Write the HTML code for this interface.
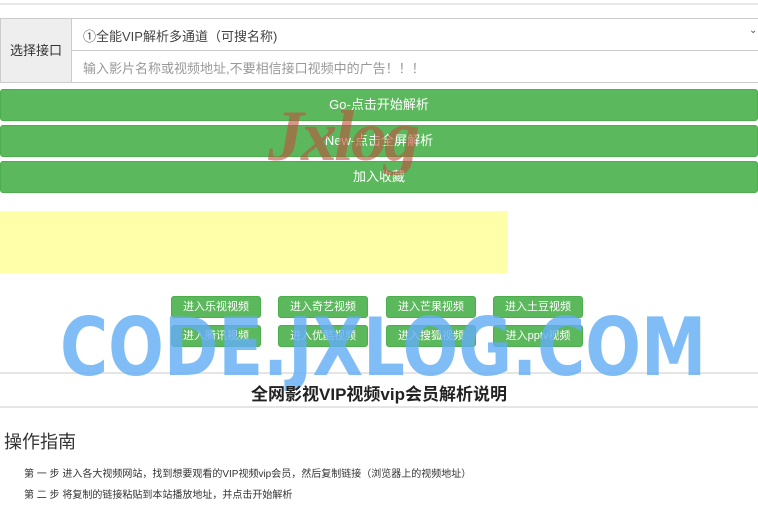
<!DOCTYPE html><html><head><meta charset="utf-8"><style>
*{margin:0;padding:0;box-sizing:border-box}
body{width:758px;height:506px;overflow:hidden;background:#fff;font-family:"Liberation Sans","Noto Sans CJK SC",sans-serif;position:relative}
.a{position:absolute}
.btn{position:absolute;left:0;width:758px;height:32px;background:#5cb85c;border:1px solid #4cae4c;border-radius:3px;color:#fff;font-size:13px;text-align:center;line-height:30px}
.sb{position:absolute;width:90px;height:22px;background:#5cb85c;border:1px solid #4cae4c;border-radius:3px;color:#fff;font-size:11px;text-align:center;line-height:20px}
</style></head><body>
<div class="a" style="left:0;top:3px;width:758px;height:2px;background:#e8e8e8"></div>
<div class="a" style="left:0;top:18px;width:758px;height:65px;border:1px solid #ccc;border-right:none"></div>
<div class="a" style="left:1px;top:19px;width:71px;height:63px;background:#eee;border-right:1px solid #ccc;font-size:13px;color:#333;line-height:63px;text-align:center">选择接口</div>
<div class="a" style="left:72px;top:50px;width:686px;height:1px;background:#ccc"></div>
<div class="a" style="left:83px;top:26px;font-size:13px;color:#444">①全能VIP解析多通道（可搜名称)</div>
<div class="a" style="left:749px;top:25px;font-size:10px;color:#555">⌄</div>
<div class="a" style="left:83px;top:58px;font-size:13px;color:#999">输入影片名称或视频地址,不要相信接口视频中的广告！！！</div>
<div class="btn" style="top:89px">Go-点击开始解析</div>
<div class="btn" style="top:125px">New-点击全屏解析</div>
<div class="btn" style="top:161px">加入收藏</div>
<div class="a" style="left:268px;top:96px;font-family:'Liberation Serif',serif;font-style:italic;font-weight:bold;font-size:72px;line-height:80px;color:rgba(190,80,60,0.6);letter-spacing:-3px">Jxlog</div>
<div class="a" style="left:0;top:211px;width:508px;height:62px;background:#ffffaa"></div>
<div class="sb" style="left:171px;top:296px">进入乐视视频</div>
<div class="sb" style="left:278px;top:296px">进入奇艺视频</div>
<div class="sb" style="left:386px;top:296px">进入芒果视频</div>
<div class="sb" style="left:493px;top:296px">进入土豆视频</div>
<div class="sb" style="left:171px;top:325px">进入腾讯视频</div>
<div class="sb" style="left:278px;top:325px">进入优酷视频</div>
<div class="sb" style="left:386px;top:325px">进入搜狐视频</div>
<div class="sb" style="left:493px;top:325px">进入pptv视频</div>
<div class="a" style="left:0;top:372px;width:758px;height:2px;background:#e5e5e5"></div>
<div class="a" style="left:0;top:406px;width:758px;height:2px;background:#e5e5e5"></div>
<div class="a" style="left:60px;top:303px;font-family:'DejaVu Sans',sans-serif;font-weight:bold;font-size:80px;line-height:90px;color:rgba(100,175,245,0.82);transform:scaleX(0.82);transform-origin:left;white-space:nowrap">CODE.JXLOG.COM</div>
<div class="a" style="left:0;top:380px;width:758px;text-align:center;font-size:17px;font-weight:bold;color:#222">全网影视VIP视频vip会员解析说明</div>
<div class="a" style="left:4px;top:428px;font-size:18px;color:#333">操作指南</div>
<div class="a" style="left:24px;top:465px;font-size:10px;color:#333">第 一 步 进入各大视频网站，找到想要观看的VIP视频vip会员，然后复制链接（浏览器上的视频地址）</div>
<div class="a" style="left:24px;top:486px;font-size:10px;color:#333">第 二 步 将复制的链接粘贴到本站播放地址，并点击开始解析</div>
</body></html>
